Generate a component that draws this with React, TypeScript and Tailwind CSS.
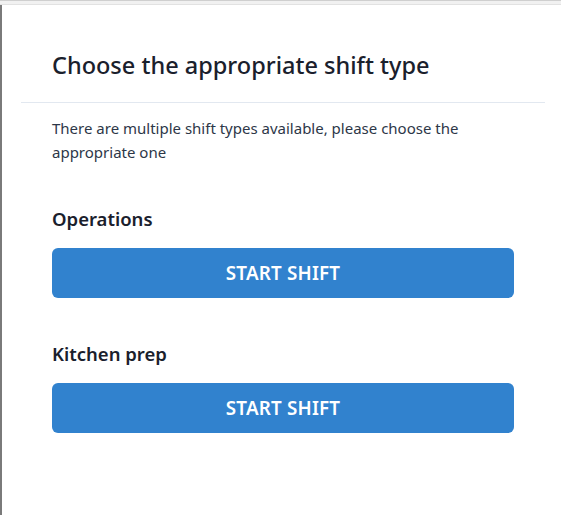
const shiftTypes = ['Operations', 'Kitchen prep']

const App = () => {
  return (
    <div
      className="min-h-screen bg-white text-[#1a202c]"
      style={{ fontFamily: '"Noto Sans", "Open Sans", sans-serif' }}
    >
      {/* browser-ish top edge */}
      <div className="h-[1px] bg-[#cfcfcf]" />
      <div className="h-[4px] bg-[#f1f1f1] border-b border-[#e2e2e2]" />

      <div className="flex min-h-[510px]">
        <div className="w-[2px] bg-[#7a7a7a]" />
        <div className="flex-1 pl-[19px] pr-[16px]">
          <div className="px-[31px] pt-[45px] pb-[21px]">
            <h2 className="text-[23.5px] leading-[31px] font-medium">Choose the appropriate shift type</h2>
          </div>
          <div className="h-[1px] bg-[#e2e8f0]" />

          <div className="px-[31px] pt-[13px]">
            <p className="text-[15px] leading-[24px] text-[#2d3748]">
              There are multiple shift types available, please choose the appropriate one
            </p>

            <div className="mt-[42px] flex flex-col gap-[43px]">
              {shiftTypes.map((name) => (
                <div key={name} className="flex flex-col gap-[16px]">
                  <h3 className="text-[18.5px] leading-[26px] font-semibold">{name}</h3>
                  <button className="h-[50px] w-full rounded-[6px] bg-[#3182ce] text-white text-[18.8px] font-semibold tracking-[0.2px]">
                    START SHIFT
                  </button>
                </div>
              ))}
            </div>
          </div>
        </div>
      </div>
    </div>
  )
}

export default App
